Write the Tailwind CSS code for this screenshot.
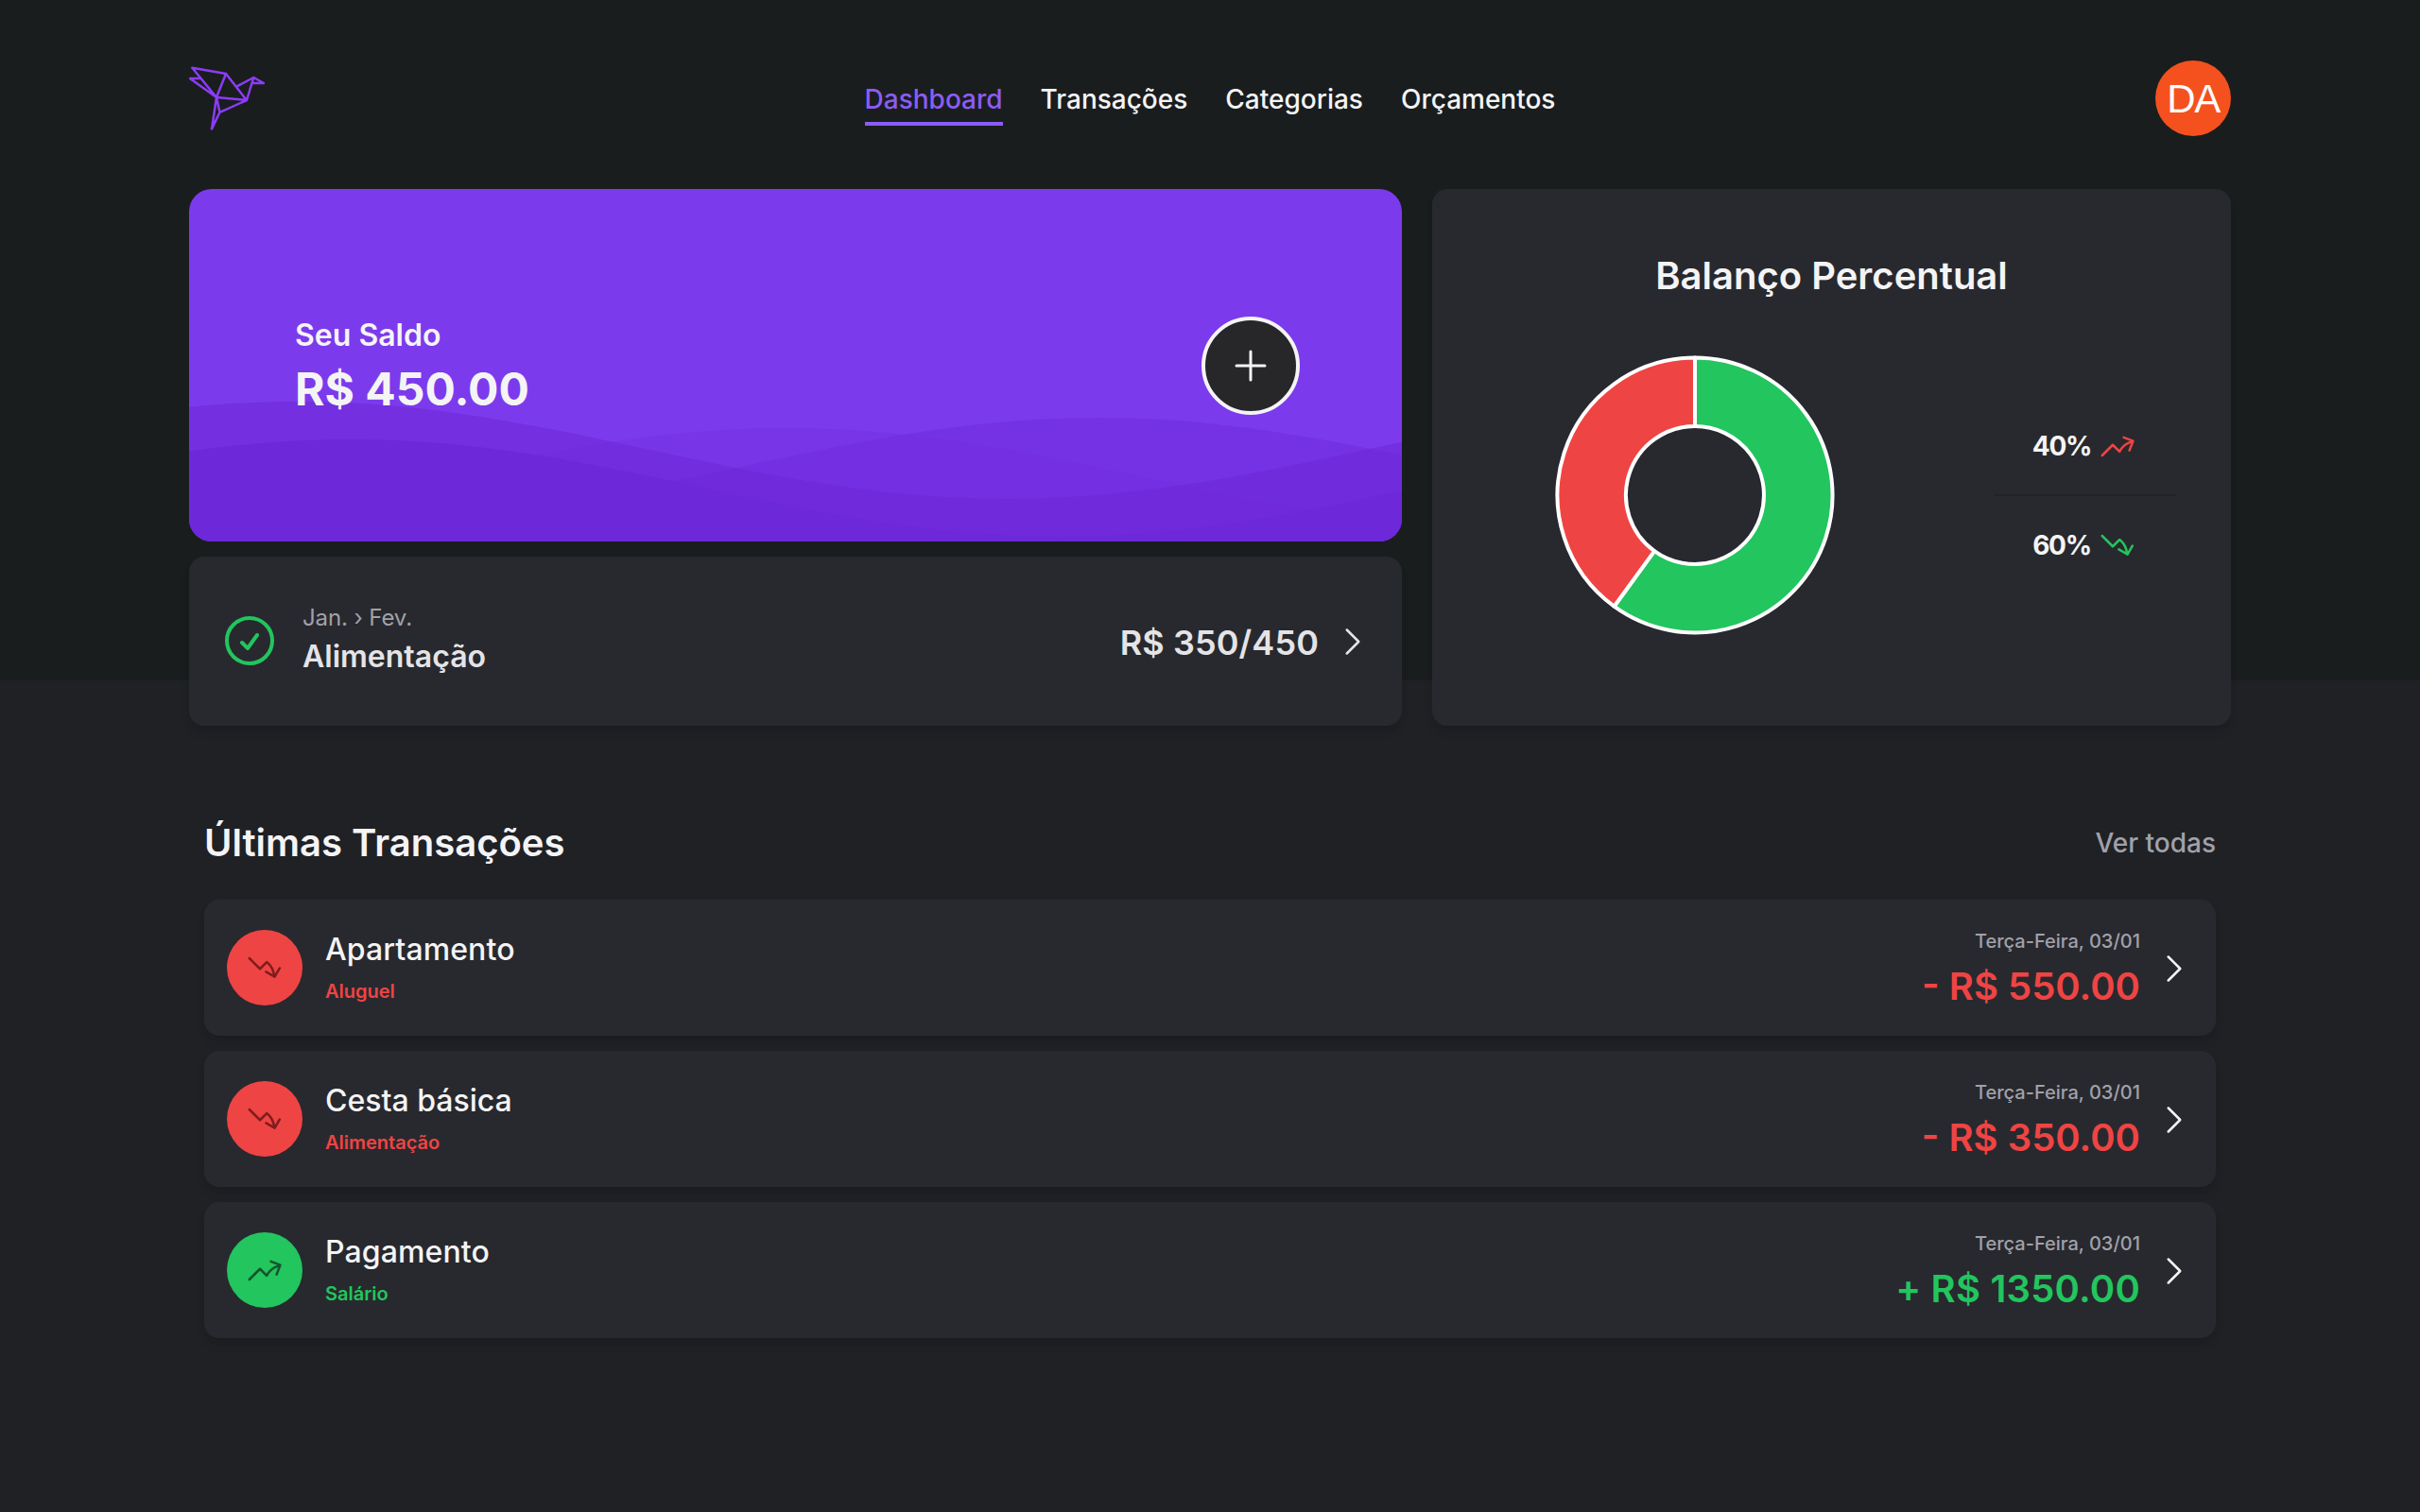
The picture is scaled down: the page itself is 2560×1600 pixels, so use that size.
<!DOCTYPE html>
<html lang="pt-BR">
<head>
<meta charset="utf-8">
<title>Dashboard</title>
<script src="https://cdn.jsdelivr.net/npm/@tailwindcss/browser@4"></script>
</head>
<body class="min-h-screen bg-[linear-gradient(#1a1d1e_720px,#202125_720px)] font-['Inter',sans-serif] text-[#f4f4f5]">
<svg class="hidden">
  <symbol id="chevron" viewBox="0 0 24 24"><path d="M8.25 4.5l7.5 7.5-7.5 7.5"/></symbol>
  <symbol id="up" viewBox="0 0 24 24"><path d="M2.25 18L9 11.25l4.306 4.307a11.95 11.95 0 015.814-5.519l2.74-1.22m0 0l-5.94-2.28m5.94 2.28l-2.28 5.941"/></symbol>
  <symbol id="down" viewBox="0 0 24 24"><path d="M2.25 6L9 12.75l4.286-4.286a11.948 11.948 0 014.306 6.43l.776 2.898m0 0l3.182-5.511m-3.182 5.51l-5.511-3.181"/></symbol>
</svg>
<div class="mx-auto w-[2160px]">
  <header class="grid h-[200px] grid-cols-[1fr_auto_1fr] items-start pt-16">
    <svg class="h-20 w-20 fill-none stroke-[#8b3cf7] stroke-[2.5]" viewBox="0 0 80 80" stroke-linejoin="round" stroke-linecap="round">
      <path d="M3.3 7.7L39 14 29 39zM29 39L.9 19H12.5M39 14L60.8 42 29 39M50.7 27.3L68.3 18 79 24H67.5M68.3 18L61 42 32.5 54.8 29 39 24 72.5 32.5 54.8"/>
    </svg>
    <nav class="flex gap-10 pt-[21px] text-[28px] leading-10 font-medium">
      <a class="border-b-4 border-[#8b5cf6] pb-1 text-[#8b5cf6]">Dashboard</a>
      <a>Transações</a>
      <a>Categorias</a>
      <a>Orçamentos</a>
    </nav>
    <div class="flex h-20 w-20 items-center justify-center justify-self-end rounded-full bg-[#f4511e] font-['Liberation_Sans',sans-serif] text-[42px] tracking-[-1.5px] text-white">DA</div>
  </header>

  <main>
    <section class="grid h-[568px] grid-cols-[1283px_845px] gap-8">
      <div class="grid grid-rows-[373px_179px] gap-4">
        <div class="relative flex items-center justify-between overflow-hidden rounded-3xl bg-[#7c3aed] pr-[108px] pl-28">
          <svg class="absolute inset-0 h-full w-full fill-[#6d28d9]" viewBox="0 -1 1284 373" preserveAspectRatio="none">
            <path fill-opacity=".265" d="M-119 355C155 355 359 252 633 252S1111 355 1385 355V373H-119z"/>
            <path fill-opacity=".45" d="M211 344C485 344 689 241 963 241S1441 344 1715 344V373H211z"/>
            <path fill-opacity=".62" d="M-637 327C-363 327 -159 224 115 224S593 327 867 327 1345 224 1619 224V373H-637z"/>
            <path d="M-582 367C-308 367 -104 264 170 264S648 367 922 367 1400 264 1674 264V373H-582z"/>
          </svg>
          <div class="relative pt-px">
            <p class="text-[32px] leading-12 font-semibold">Seu Saldo</p>
            <p class="pt-px text-5xl leading-16 font-bold">R$ 450.00</p>
          </div>
          <button class="relative flex h-[104px] w-[104px] items-center justify-center rounded-full border-4 border-[#f4f4f5] bg-[#27272a]">
            <svg class="h-12 w-12 fill-none stroke-current stroke-[1.5]" viewBox="0 0 24 24" stroke-linecap="round"><path d="M12 4.5v15m7.5-7.5h-15"/></svg>
          </button>
        </div>
        <div class="flex items-center rounded-2xl bg-[#28292e] px-8 text-[#e4e4e7] shadow-[0_8px_12px_-2px_rgb(0_0_0/0.1),0_4px_8px_-4px_rgb(0_0_0/0.1)]">
          <svg class="mb-px h-16 w-16 fill-none stroke-[#22c55e] stroke-[1.5]" viewBox="0 0 24 24" stroke-linecap="round" stroke-linejoin="round"><path d="M9 12.75L11.25 15 15 9.75M21 12a9 9 0 11-18 0 9 9 0 0118 0z"/></svg>
          <div class="ml-6 flex-1">
            <p class="-mt-px pb-px text-2xl leading-8 tracking-[-0.1px] text-[#a1a1aa]">Jan. › Fev.</p>
            <p class="text-[32px] leading-12 font-semibold">Alimentação</p>
          </div>
          <p class="mt-0.5 mr-4 text-4xl font-semibold tracking-[0.1px]">R$ 350/450</p>
          <svg class="h-10 w-10 fill-none stroke-current stroke-[1.5]" stroke-linecap="round" stroke-linejoin="round"><use href="#chevron"/></svg>
        </div>
      </div>

      <div class="rounded-2xl bg-[#28292e] pt-16 shadow-[0_8px_12px_-2px_rgb(0_0_0/0.1),0_4px_8px_-4px_rgb(0_0_0/0.1)]">
        <h2 class="text-center text-[40px] leading-14 font-semibold">Balanço Percentual</h2>
        <div class="mt-14 flex items-center justify-between pr-[59px] pl-[130px]">
          <svg class="h-[296px] w-[296px] stroke-white stroke-[4]" viewBox="-148 -148 296 296" stroke-linejoin="round">
            <path class="fill-[#22c55e]" d="M0-145.5A145.5 145.5 0 1 1-85.5 117.7L-42.9 59.1A73 73 0 1 0 0-73z"/>
            <path class="fill-[#ef4444]" d="M-85.5 117.7A145.5 145.5 0 0 1 0-145.5V-73A73 73 0 0 0-42.9 59.1z"/>
          </svg>
          <div class="w-48 divide-y-2 divide-[#222327] text-[28px] leading-10 font-bold tracking-[-1.3px]">
            <div class="flex items-center justify-center gap-2 pb-[31px]">
              <span class="pt-px">40%</span>
              <svg class="h-10 w-10 fill-none stroke-[#ef4444] stroke-[1.5]" stroke-linecap="round" stroke-linejoin="round"><use href="#up"/></svg>
            </div>
            <div class="flex items-center justify-center gap-2 pt-8">
              <span>60%</span>
              <svg class="h-10 w-10 fill-none stroke-[#22c55e] stroke-[1.5]" stroke-linecap="round" stroke-linejoin="round"><use href="#down"/></svg>
            </div>
          </div>
        </div>
      </div>
    </section>

    <section class="px-4 pt-24">
      <div class="flex h-14 items-center justify-between">
        <h2 class="text-[40px] font-semibold">Últimas Transações</h2>
        <a class="text-[28px] font-medium text-[#a1a1aa]">Ver todas</a>
      </div>
      <ul class="mt-8 flex flex-col gap-4">
        <li class="flex h-36 items-center rounded-2xl bg-[#28292e] px-6 shadow-[0_8px_12px_-2px_rgb(0_0_0/0.1),0_4px_8px_-4px_rgb(0_0_0/0.1)]">
          <div class="flex h-20 w-20 items-center justify-center rounded-full bg-[#ef4444]">
            <svg class="h-10 w-10 fill-none stroke-[#7f1d1d] stroke-[1.5]" stroke-linecap="round" stroke-linejoin="round"><use href="#down"/></svg>
          </div>
          <div class="ml-6 flex-1 pt-0.5">
            <p class="text-[32px] leading-12 font-medium tracking-[0.1px]">Apartamento</p>
            <p class="text-xl leading-10 font-semibold text-[#ef4444]">Aluguel</p>
          </div>
          <div class="mr-4 text-right">
            <p class="text-xl leading-10 font-medium text-[#a1a1aa]">Terça-Feira, 03/01</p>
            <p class="text-[40px] leading-14 font-semibold text-[#ef4444]">- R$ 550.00</p>
          </div>
          <svg class="mt-px h-10 w-10 fill-none stroke-current stroke-[1.5]" stroke-linecap="round" stroke-linejoin="round"><use href="#chevron"/></svg>
        </li>
        <li class="flex h-36 items-center rounded-2xl bg-[#28292e] px-6 shadow-[0_8px_12px_-2px_rgb(0_0_0/0.1),0_4px_8px_-4px_rgb(0_0_0/0.1)]">
          <div class="flex h-20 w-20 items-center justify-center rounded-full bg-[#ef4444]">
            <svg class="h-10 w-10 fill-none stroke-[#7f1d1d] stroke-[1.5]" stroke-linecap="round" stroke-linejoin="round"><use href="#down"/></svg>
          </div>
          <div class="ml-6 flex-1 pt-0.5">
            <p class="text-[32px] leading-12 font-medium">Cesta básica</p>
            <p class="text-xl leading-10 font-semibold text-[#ef4444]">Alimentação</p>
          </div>
          <div class="mr-4 text-right">
            <p class="text-xl leading-10 font-medium text-[#a1a1aa]">Terça-Feira, 03/01</p>
            <p class="text-[40px] leading-14 font-semibold text-[#ef4444]">- R$ 350.00</p>
          </div>
          <svg class="mt-px h-10 w-10 fill-none stroke-current stroke-[1.5]" stroke-linecap="round" stroke-linejoin="round"><use href="#chevron"/></svg>
        </li>
        <li class="flex h-36 items-center rounded-2xl bg-[#28292e] px-6 shadow-[0_8px_12px_-2px_rgb(0_0_0/0.1),0_4px_8px_-4px_rgb(0_0_0/0.1)]">
          <div class="flex h-20 w-20 items-center justify-center rounded-full bg-[#22c55e]">
            <svg class="h-10 w-10 fill-none stroke-[#14532d] stroke-[1.5]" stroke-linecap="round" stroke-linejoin="round"><use href="#up"/></svg>
          </div>
          <div class="ml-6 flex-1 pt-0.5">
            <p class="text-[32px] leading-12 font-medium tracking-[0.1px]">Pagamento</p>
            <p class="text-xl leading-10 font-semibold text-[#22c55e]">Salário</p>
          </div>
          <div class="mr-4 text-right">
            <p class="text-xl leading-10 font-medium text-[#a1a1aa]">Terça-Feira, 03/01</p>
            <p class="text-[40px] leading-14 font-semibold tracking-[0.2px] text-[#22c55e]">+ R$ 1350.00</p>
          </div>
          <svg class="mt-px h-10 w-10 fill-none stroke-current stroke-[1.5]" stroke-linecap="round" stroke-linejoin="round"><use href="#chevron"/></svg>
        </li>
      </ul>
    </section>
  </main>
</div>
</body>
</html>
